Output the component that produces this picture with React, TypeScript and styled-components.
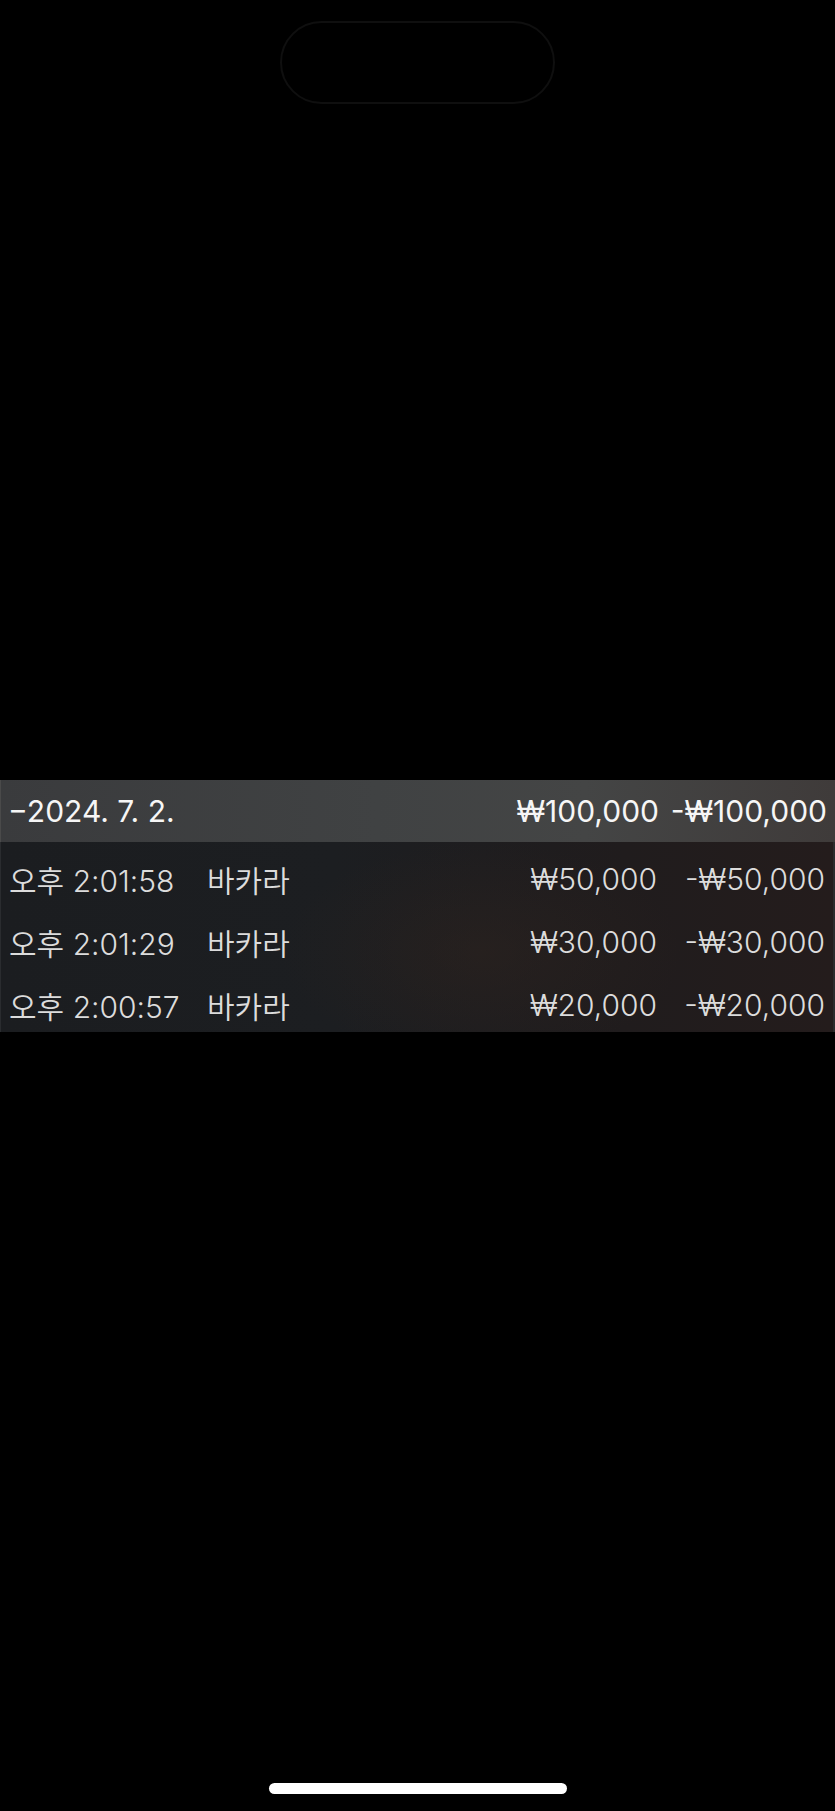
import React from "react";
import styled, { createGlobalStyle } from "styled-components";

const Global = createGlobalStyle`
  html, body { margin: 0; padding: 0; background: #000; }
  body { font-family: Inter, "Noto Sans CJK KR", sans-serif; }
`;

const Screen = styled.div`
  width: 835px;
  height: 1811px;
  background: #000;
  display: flex;
  flex-direction: column;
  align-items: center;
  overflow: hidden;
`;

const Island = styled.div`
  margin-top: 21px;
  width: 275px;
  height: 83px;
  box-sizing: border-box;
  border: 2px solid #0f0f0f;
  border-radius: 42px;
  background: #000;
`;

const Table = styled.div`
  margin-top: 676px;
  width: 835px;
  height: 252px;
  display: flex;
  flex-direction: column;
  overflow: hidden;
`;

const Row = styled.div<{ $header?: boolean }>`
  display: grid;
  grid-template-columns: 198px 1fr 160px 168px;
  align-items: center;
  height: ${(p) => (p.$header ? 62 : 63)}px;
  flex-shrink: 0;
  padding: 0 8px 0 8px;
  font-size: 30px;
  font-weight: ${(p) => (p.$header ? 370 : 350)};
  color: ${(p) => (p.$header ? "#f6f6f6" : "#dcdcdc")};
`;

const HeaderBar = styled.div`
  background: linear-gradient(90deg, #3a3b3d 0%, #404243 45%, #444545 70%, #3f3b3a 100%);
  border-left: 1px solid #4a4a4a;
`;

const Body = styled.div`
  flex: 1;
  padding-top: 5px;
  overflow: hidden;
  background:
    radial-gradient(ellipse 200px 110px at 480px 110px, rgba(48, 36, 30, 0.45), rgba(0,0,0,0)),
    linear-gradient(90deg, #1b1d20 0%, #1c1e21 40%, #201c1d 75%, #241c1c 100%);
  border-left: 1px solid #2a2c2f;
  border-right: 2px solid #2b2b2c;
`;

const DateCell = styled.div`
  grid-column: 1 / 3;
  margin-left: -1px;
`;

const Cell = styled.div<{ $right?: boolean }>`
  text-align: ${(p) => (p.$right ? "right" : "left")};
  white-space: nowrap;
`;

const HomeBar = styled.div`
  margin-top: 751px;
  width: 298px;
  height: 11px;
  border-radius: 6px;
  background: #fff;
`;

const rows = [
  { time: "오후 2:01:58", game: "바카라", bet: "₩50,000", result: "-₩50,000" },
  { time: "오후 2:01:29", game: "바카라", bet: "₩30,000", result: "-₩30,000" },
  { time: "오후 2:00:57", game: "바카라", bet: "₩20,000", result: "-₩20,000" },
];

export default function App() {
  return (
    <>
      <Global />
      <Screen>
        <Island />
        <Table>
          <HeaderBar>
            <Row $header>
              <DateCell>−2024. 7. 2.</DateCell>
              <Cell $right>₩100,000</Cell>
              <Cell $right>-₩100,000</Cell>
            </Row>
          </HeaderBar>
          <Body>
            {rows.map((r) => (
              <Row key={r.time}>
                <Cell>{r.time}</Cell>
                <Cell>{r.game}</Cell>
                <Cell $right>{r.bet}</Cell>
                <Cell $right>{r.result}</Cell>
              </Row>
            ))}
          </Body>
        </Table>
        <HomeBar />
      </Screen>
    </>
  );
}
